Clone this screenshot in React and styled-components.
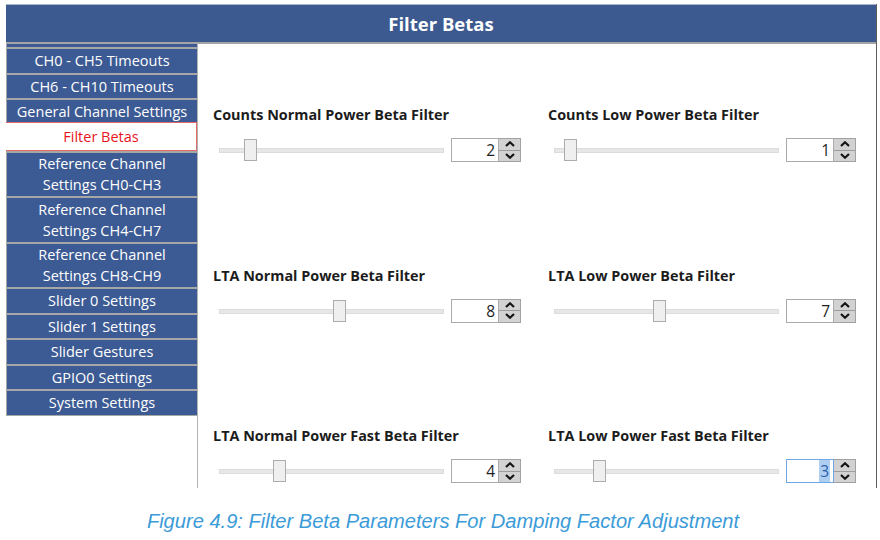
import styled, { createGlobalStyle } from "styled-components";

const GlobalStyle = createGlobalStyle`
  html, body {
    margin: 0;
    background: #ffffff;
  }
  body {
    font-family: "Open Sans", "Noto Sans", sans-serif;
  }
`;

const menuItems = [
  { label: "CH0 - CH5 Timeouts" },
  { label: "CH6 - CH10 Timeouts" },
  { label: "General Channel Settings" },
  { label: "Filter Betas", active: true },
  { label: "Reference Channel\nSettings CH0-CH3", tall: true },
  { label: "Reference Channel\nSettings CH4-CH7", tall: true },
  { label: "Reference Channel\nSettings CH8-CH9", tall: true },
  { label: "Slider 0 Settings" },
  { label: "Slider 1 Settings" },
  { label: "Slider Gestures" },
  { label: "GPIO0 Settings" },
  { label: "System Settings" },
];

const filters = [
  { label: "Counts Normal Power Beta Filter", value: 2 },
  { label: "Counts Low Power Beta Filter", value: 1 },
  { label: "LTA Normal Power Beta Filter", value: 8 },
  { label: "LTA Low Power Beta Filter", value: 7 },
  { label: "LTA Normal Power Fast Beta Filter", value: 4 },
  { label: "LTA Low Power Fast Beta Filter", value: 3, focused: true },
];

function Arrow({ up }) {
  return (
    <svg width="10" height="6" viewBox="0 0 10 6">
      <path
        d={up ? "M1 5 L5 1.3 L9 5" : "M1 1 L5 4.7 L9 1"}
        fill="none"
        stroke="#141414"
        strokeWidth="2.2"
      />
    </svg>
  );
}

function SpinBox({ value, focused }) {
  return (
    <Spin>
      <NumberBox $focused={focused}>
        {focused ? <Selected>{value}</Selected> : value}
      </NumberBox>
      <Spinner>
        <SpinButton>
          <Arrow up />
        </SpinButton>
        <SpinButton>
          <Arrow />
        </SpinButton>
      </Spinner>
    </Spin>
  );
}

function FilterControl({ label, value, focused }) {
  return (
    <Cell>
      <Label>{label}</Label>
      <ControlRow>
        <Track>
          <Rail />
          <Thumb style={{ left: `${value * 14.83 - 5}px` }} />
        </Track>
        <SpinBox value={value} focused={focused} />
      </ControlRow>
    </Cell>
  );
}

export default function App() {
  return (
    <Page>
      <GlobalStyle />
      <Window>
        <TitleBar>Filter Betas</TitleBar>
        <Body>
          <Sidebar>
            <Sliver />
            {menuItems.map((item) => (
              <MenuItem key={item.label} $active={item.active} $tall={item.tall}>
                {item.label}
              </MenuItem>
            ))}
          </Sidebar>
          <Content>
            {filters.map((f) => (
              <FilterControl key={f.label} {...f} />
            ))}
          </Content>
        </Body>
      </Window>
      <Caption>Figure 4.9: Filter Beta Parameters For Damping Factor Adjustment</Caption>
    </Page>
  );
}

const Page = styled.div`
  width: 880px;
  height: 540px;
  padding: 4px 0 0 6px;
  box-sizing: border-box;
  overflow: hidden;
`;

const Window = styled.div`
  width: 870px;
  height: 484px;
  display: flex;
  flex-direction: column;
  border-right: 1px solid #5e5e5e;
  overflow: hidden;
`;

const TitleBar = styled.div`
  flex-shrink: 0;
  height: 37px;
  border-top: 1px solid #a9b6cb;
  border-bottom: 2px solid #a4a4a4;
  background: #3c5a8f;
  color: #ffffff;
  font-weight: 700;
  font-size: 18.5px;
  display: flex;
  align-items: center;
  justify-content: center;
`;

const Body = styled.div`
  flex: 1;
  min-height: 0;
  display: grid;
  grid-template-columns: 192px 1fr;
  overflow: hidden;
`;

const Sidebar = styled.div`
  border-right: 1px solid #b3b3b3;
  display: flex;
  flex-direction: column;
`;

const Sliver = styled.div`
  height: 3px;
  flex-shrink: 0;
  background: #3c5a93;
  border-left: 1px solid #a3a3a3;
`;

const MenuItem = styled.div`
  flex-shrink: 0;
  height: ${(p) => (p.$tall ? "43px" : "23.5px")};
  border-top: 2px solid #a6a6a6;
  border-left: 1px solid #a6a6a6;
  background: #3c5a93;
  color: #ffffff;
  font-size: 14.5px;
  line-height: ${(p) => (p.$tall ? "21px" : "23.5px")};
  padding-top: ${(p) => (p.$tall ? "0.5px" : "0")};
  text-align: center;
  white-space: pre-line;
  box-sizing: border-box;
  box-sizing: content-box;
  &:last-child {
    border-bottom: 1px solid #a6a6a6;
  }
  ${(p) =>
    p.$active &&
    `
    position: relative;
    height: 27px;
    line-height: 27px;
    margin-top: -2px;
    margin-left: -1px;
    background: #ffffff;
    color: #e8141c;
    border: 1px solid #e36a6a;
  `}
`;

const Content = styled.div`
  padding: 61px 0 0 15px;
  display: grid;
  grid-template-columns: 335px 335px;
  grid-template-rows: 160.5px 160.5px auto;
  align-content: start;
`;

const Cell = styled.div`
  display: flex;
  flex-direction: column;
`;

const Label = styled.div`
  height: 20px;
  line-height: 20px;
  font-size: 14.4px;
  font-weight: 700;
  color: #1c1c1c;
`;

const ControlRow = styled.div`
  margin-top: 13px;
  height: 24px;
  padding-left: 6px;
  display: flex;
  align-items: center;
`;

const Track = styled.div`
  position: relative;
  width: 225px;
  height: 24px;
`;

const Rail = styled.div`
  position: absolute;
  left: 0;
  right: 0;
  top: 10px;
  height: 3px;
  background: #e7e7e7;
  border: 1px solid #dcdcdc;
`;

const Thumb = styled.div`
  position: absolute;
  top: 1px;
  width: 11px;
  height: 20px;
  background: #efefef;
  border: 1px solid #acacac;
`;

const Spin = styled.div`
  margin-left: 7px;
  display: flex;
  height: 24px;
`;

const NumberBox = styled.div`
  width: 48px;
  height: 24px;
  box-sizing: border-box;
  border: 1px solid ${(p) => (p.$focused ? "#6fa6e3" : "#ababab")};
  background: #ffffff;
  text-align: right;
  padding-right: 3px;
  font-size: 15.5px;
  line-height: 22px;
  color: #1f1f1f;
`;

const Selected = styled.span`
  background: #aecff2;
  color: #2b5fae;
  padding: 0 1px;
`;

const Spinner = styled.div`
  width: 22px;
  height: 24px;
  box-sizing: border-box;
  border: 1px solid #a2a2a2;
  border-left: none;
  display: flex;
  flex-direction: column;
  gap: 1px;
  background: #9c9c9c;
`;

const SpinButton = styled.div`
  flex: 1;
  background: #d2d2d2;
  display: flex;
  align-items: center;
  justify-content: center;
`;

const Caption = styled.div`
  margin-top: 22px;
  text-align: center;
  font-family: "Liberation Sans", Arial, sans-serif;
  font-style: italic;
  font-size: 20.1px;
  line-height: 22px;
  color: #3b9bd8;
`;
